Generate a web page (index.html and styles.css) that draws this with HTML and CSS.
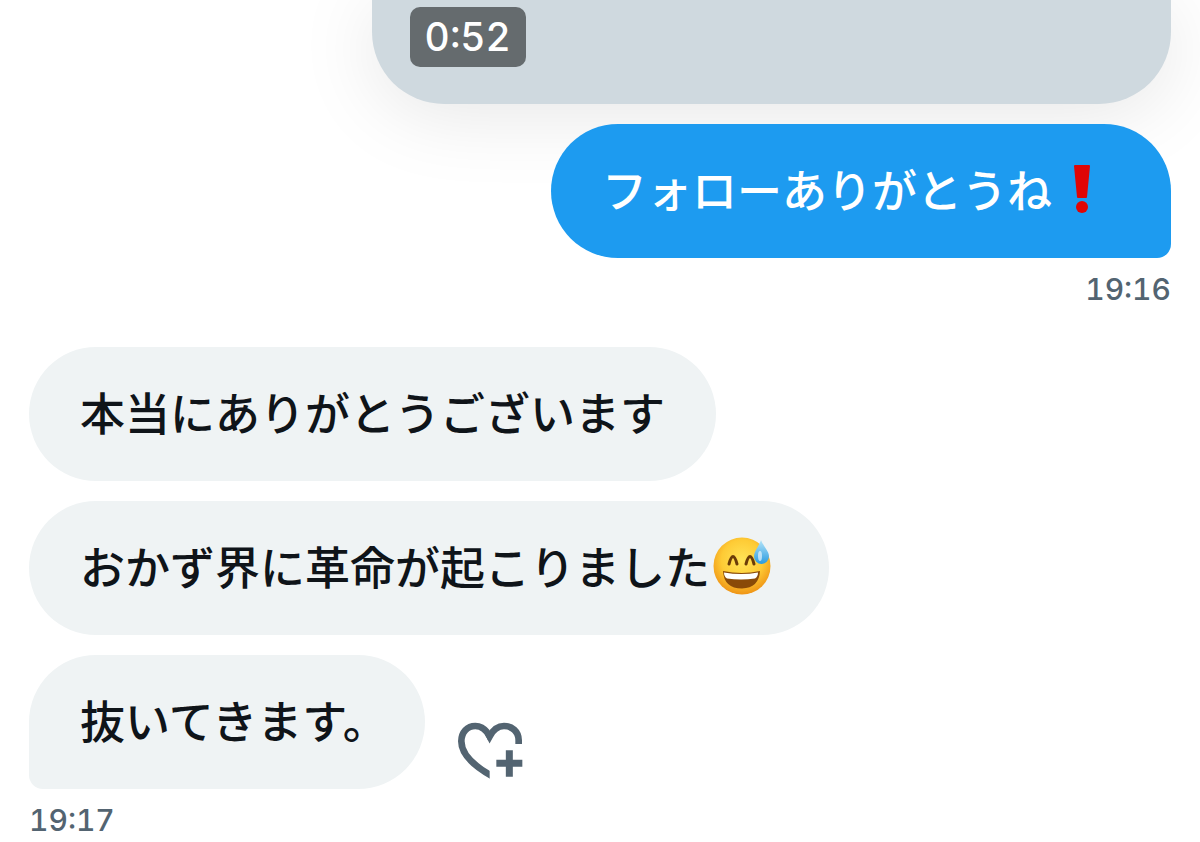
FILE: index.html
```html
<!DOCTYPE html>
<html lang="ja">
<head>
    <meta charset="UTF-8">
    <meta name="viewport" content="width=device-width, initial-scale=1.0">
    <title>メッセージ</title>
    <link rel="stylesheet" href="styles.css">
</head>
<body>

    <main class="chat">
        <section class="group sent">
            <div class="video">
                <span class="duration">0:52</span>
            </div>
            <div class="bubble last">
                <span>フォローありがとうね</span>
                <svg class="emoji" viewBox="0 0 68 58" role="img" aria-label="!">
                    <path d="M22 6q0-1 1-1h14q1 0 1 1l-3 31q0 1-1 1h-8q-1 0-1-1z" fill="#e00505"/>
                    <circle cx="30" cy="47" r="6" fill="#e00505"/>
                </svg>
            </div>
            <time class="time">19:16</time>
        </section>

        <section class="group received">
            <div class="bubble">
                <span>本当にありがとうございます</span>
            </div>
            <div class="bubble">
                <span>おかず界に革命が起こりました</span>
                <svg class="emoji" viewBox="0 0 68 58" role="img" aria-label="汗笑い">
                    <defs>
                        <radialGradient id="face" cx="50%" cy="40%" r="60%">
                            <stop offset="0" stop-color="#ffe458"/>
                            <stop offset="0.6" stop-color="#fecb35"/>
                            <stop offset="1" stop-color="#ef9415"/>
                        </radialGradient>
                        <linearGradient id="drop" x1="0" y1="0" x2="0" y2="1">
                            <stop offset="0" stop-color="#b4e4f8"/>
                            <stop offset="1" stop-color="#2a9be0"/>
                        </linearGradient>
                    </defs>
                    <circle cx="32" cy="29" r="28.500" fill="url(#face)"/>
                    <path d="M19 27q4-15 8 0M36 27q4-15 8 0" fill="none" stroke="#6b3c08" stroke-width="3" stroke-linecap="round"/>
                    <path d="M13 34q19 4 37 0q-1 17-18 17.500q-18 0-19-17.500z" fill="#8a4a08"/>
                    <path d="M14 35.500q17.500 3 34 0q0 4-3 6q-14 2-28 0q-3-2-3-6z" fill="#fff"/>
                    <path d="M51 3c2 6 8 11 8 16.500a7.500 7.500 0 0 1-15 0c0-5.500 5-10.500 7-16.500z" fill="url(#drop)"/>
                    <ellipse cx="50" cy="19" rx="2" ry="5" fill="#fff" opacity="0.6"/>
                </svg>
            </div>
            <div class="row">
                <div class="bubble last">
                    <span>抜いてきます。</span>
                </div>
                <button class="react" type="button" aria-label="リアクションを追加">
                    <svg viewBox="50 65 198 174" fill="none" stroke="#536471">
                        <clipPath id="left-half">
                            <path d="M40 60h108v190h-108z"/>
                        </clipPath>
                        <path d="M235 131V120C235 93 214 77 191 77C171 77 157 91 148 108L144 100" stroke-width="20"/>
                        <path d="M152 116L148 108C139 91 125 77 105 77C81 77 63 96 63 123C63 161 98 197 164 232" stroke-width="20" clip-path="url(#left-half)"/>
                        <path d="M207 150v79M168 189h78" stroke-width="21"/>
                    </svg>
                </button>
            </div>
            <time class="time">19:17</time>
        </section>
    </main>

</body>
</html>
```

FILE: styles.css
```css
/* Global styles */
body {
    font-family: "Inter", "Noto Sans CJK JP", sans-serif;
    background-color: #fff;
    color: #0f1419;
    margin: 0;
    padding: 0;
}

/* Conversation */
.chat {
    display: flex;
    flex-direction: column;
    gap: 38px;
    padding: 0 29px;
}

.group {
    display: flex;
    flex-direction: column;
    align-items: flex-start;
    gap: 20px;
}

.sent {
    align-items: flex-end;
}

/* Video attachment */
.video {
    box-sizing: border-box;
    width: 70%;
    padding: 7px 38px 37px;
    background-color: #cfd9df;
    border-radius: 0 0 72px 72px;
    box-shadow: 0 10px 80px rgba(0, 0, 0, 0.1);
}

.duration {
    display: inline-block;
    padding: 0 15px;
    border-radius: 10px;
    background-color: #656b6e;
    color: #fff;
    font-size: 39px;
    font-weight: 500;
    font-variant-numeric: tabular-nums;
    line-height: 60px;
    vertical-align: top;
}

/* Message bubbles */
.bubble {
    display: flex;
    align-items: center;
    padding: 38px 51px 42px;
    border-radius: 67px;
    background-color: #eff3f4;
    font-family: "Noto Sans CJK JP", sans-serif;
    font-size: 45px;
    font-weight: 500;
    font-feature-settings: "halt";
    line-height: 54px;
    z-index: 1;
}

.sent .bubble {
    background-color: #1d9bf0;
    color: #fff;
}

.sent .last {
    border-bottom-right-radius: 14px;
}

.received .last {
    padding-right: 60px;
    border-bottom-left-radius: 14px;
}

.emoji {
    width: 68px;
    height: 58px;
    margin: -2px 0;
}

.time {
    margin-top: -9px;
    color: #536471;
    font-size: 30px;
    font-weight: 500;
    font-variant-numeric: tabular-nums;
    line-height: 40px;
}

/* Reaction button */
.row {
    display: flex;
    align-items: flex-end;
    gap: 32px;
}

.react {
    padding: 0 0 9px;
    border: none;
    background: none;
    cursor: pointer;
}

.react svg {
    display: block;
    width: 66px;
    height: 58px;
}
```
